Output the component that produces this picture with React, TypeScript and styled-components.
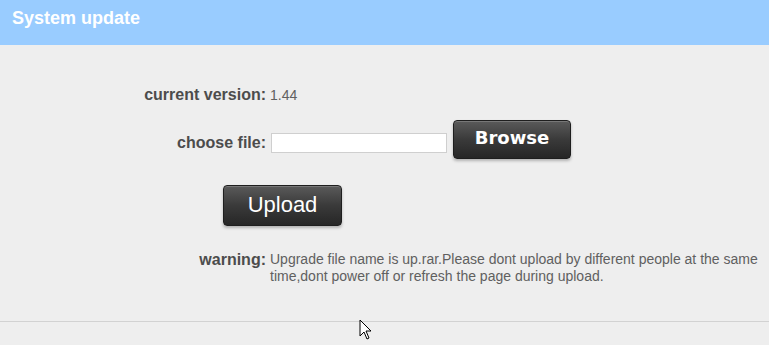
import React from 'react';
import styled, { createGlobalStyle } from 'styled-components';

const GlobalStyle = createGlobalStyle`
  html, body {
    margin: 0;
    padding: 0;
    background: #eeeeee;
    font-family: "Liberation Sans", Arial, sans-serif;
  }
`;

const Page = styled.div`
  position: relative;
  width: 769px;
  height: 345px;
  overflow: hidden;
  background: #eeeeee;
`;

const Header = styled.div`
  height: 45px;
  background: #99ccff;
  display: flex;
  align-items: center;
  padding: 0 0 8px 12px;
  box-sizing: border-box;
  color: #ffffff;
  font-size: 18px;
  font-weight: bold;
`;

const Content = styled.div`
  height: 277px;
  box-sizing: border-box;
  padding-top: 40px;
  border-bottom: 1px solid #d2d2d2;
`;

const Row = styled.div<{ $gapTop?: number; $align?: string }>`
  display: grid;
  grid-template-columns: 266px 1fr;
  column-gap: 4px;
  align-items: ${p => p.$align || 'center'};
  margin-top: ${p => p.$gapTop || 0}px;
`;

const Label = styled.div`
  text-align: right;
  font-size: 16px;
  font-weight: bold;
  color: #4c4c4c;
  line-height: 20px;
`;

const Value = styled.div`
  font-size: 14px;
  color: #606060;
  line-height: 20px;
`;

const FileBox = styled.div`
  display: flex;
  align-items: center;
  gap: 6px;
`;

const FileInput = styled.input`
  width: 176px;
  height: 20px;
  box-sizing: border-box;
  margin: 7px 0 0 1px;
  border: 1px solid #cfcfcf;
  background: #ffffff;
  outline: none;
`;

const DarkButton = styled.button<{ $w: number; $h: number; $bold?: boolean }>`
  width: ${p => p.$w}px;
  height: ${p => p.$h}px;
  border: 1px solid #1e1e1e;
  border-radius: 4px;
  background: linear-gradient(180deg, #5a5a5a 0%, #3a3a3a 50%, #262626 100%);
  box-shadow: inset 0 1px 0 rgba(255, 255, 255, 0.18), 0 2px 3px rgba(0, 0, 0, 0.25);
  color: #ffffff;
  font-family: ${p => (p.$bold ? '"DejaVu Sans", Verdana, sans-serif' : '"Liberation Sans", Arial, sans-serif')};
  font-weight: ${p => (p.$bold ? 'bold' : 'normal')};
  font-size: ${p => (p.$bold ? '18px' : '22px')};
  padding: 0 0 ${p => (p.$bold ? 4 : 2)}px;
  cursor: pointer;
`;

const ButtonRow = styled.div`
  padding-left: 223px;
  margin-top: 26px;
`;

const Warning = styled.div`
  font-size: 14px;
  color: #606060;
  line-height: 17px;
  padding-right: 4px;
`;

const WarnLabel = styled(Label)`
  line-height: 17px;
`;

const Cursor = styled.svg`
  position: absolute;
  left: 359px;
  top: 319px;
`;

export default function App() {
  return (
    <Page>
      <GlobalStyle />
      <Header>System update</Header>
      <Content>
        <Row>
          <Label>current version:</Label>
          <Value>1.44</Value>
        </Row>
        <Row $gapTop={15}>
          <Label style={{ paddingTop: 7 }}>choose file:</Label>
          <FileBox>
            <FileInput type="text" />
            <DarkButton $w={118} $h={39} $bold>Browse</DarkButton>
          </FileBox>
        </Row>
        <ButtonRow>
          <DarkButton $w={119} $h={41}>Upload</DarkButton>
        </ButtonRow>
        <Row $gapTop={25} $align="start">
          <WarnLabel>warning:</WarnLabel>
          <Warning>
            Upgrade file name is up.rar.Please dont upload by different people at the same time,dont power off or refresh the page during upload.
          </Warning>
        </Row>
      </Content>
      <Cursor width="14" height="22" viewBox="0 0 14 22">
        <path d="M1 1 L1 17 L5 13 L8 20 L10 19 L7 12 L12 12 Z" fill="#ffffff" stroke="#000000" strokeWidth="1" strokeLinejoin="round" />
      </Cursor>
    </Page>
  );
}
